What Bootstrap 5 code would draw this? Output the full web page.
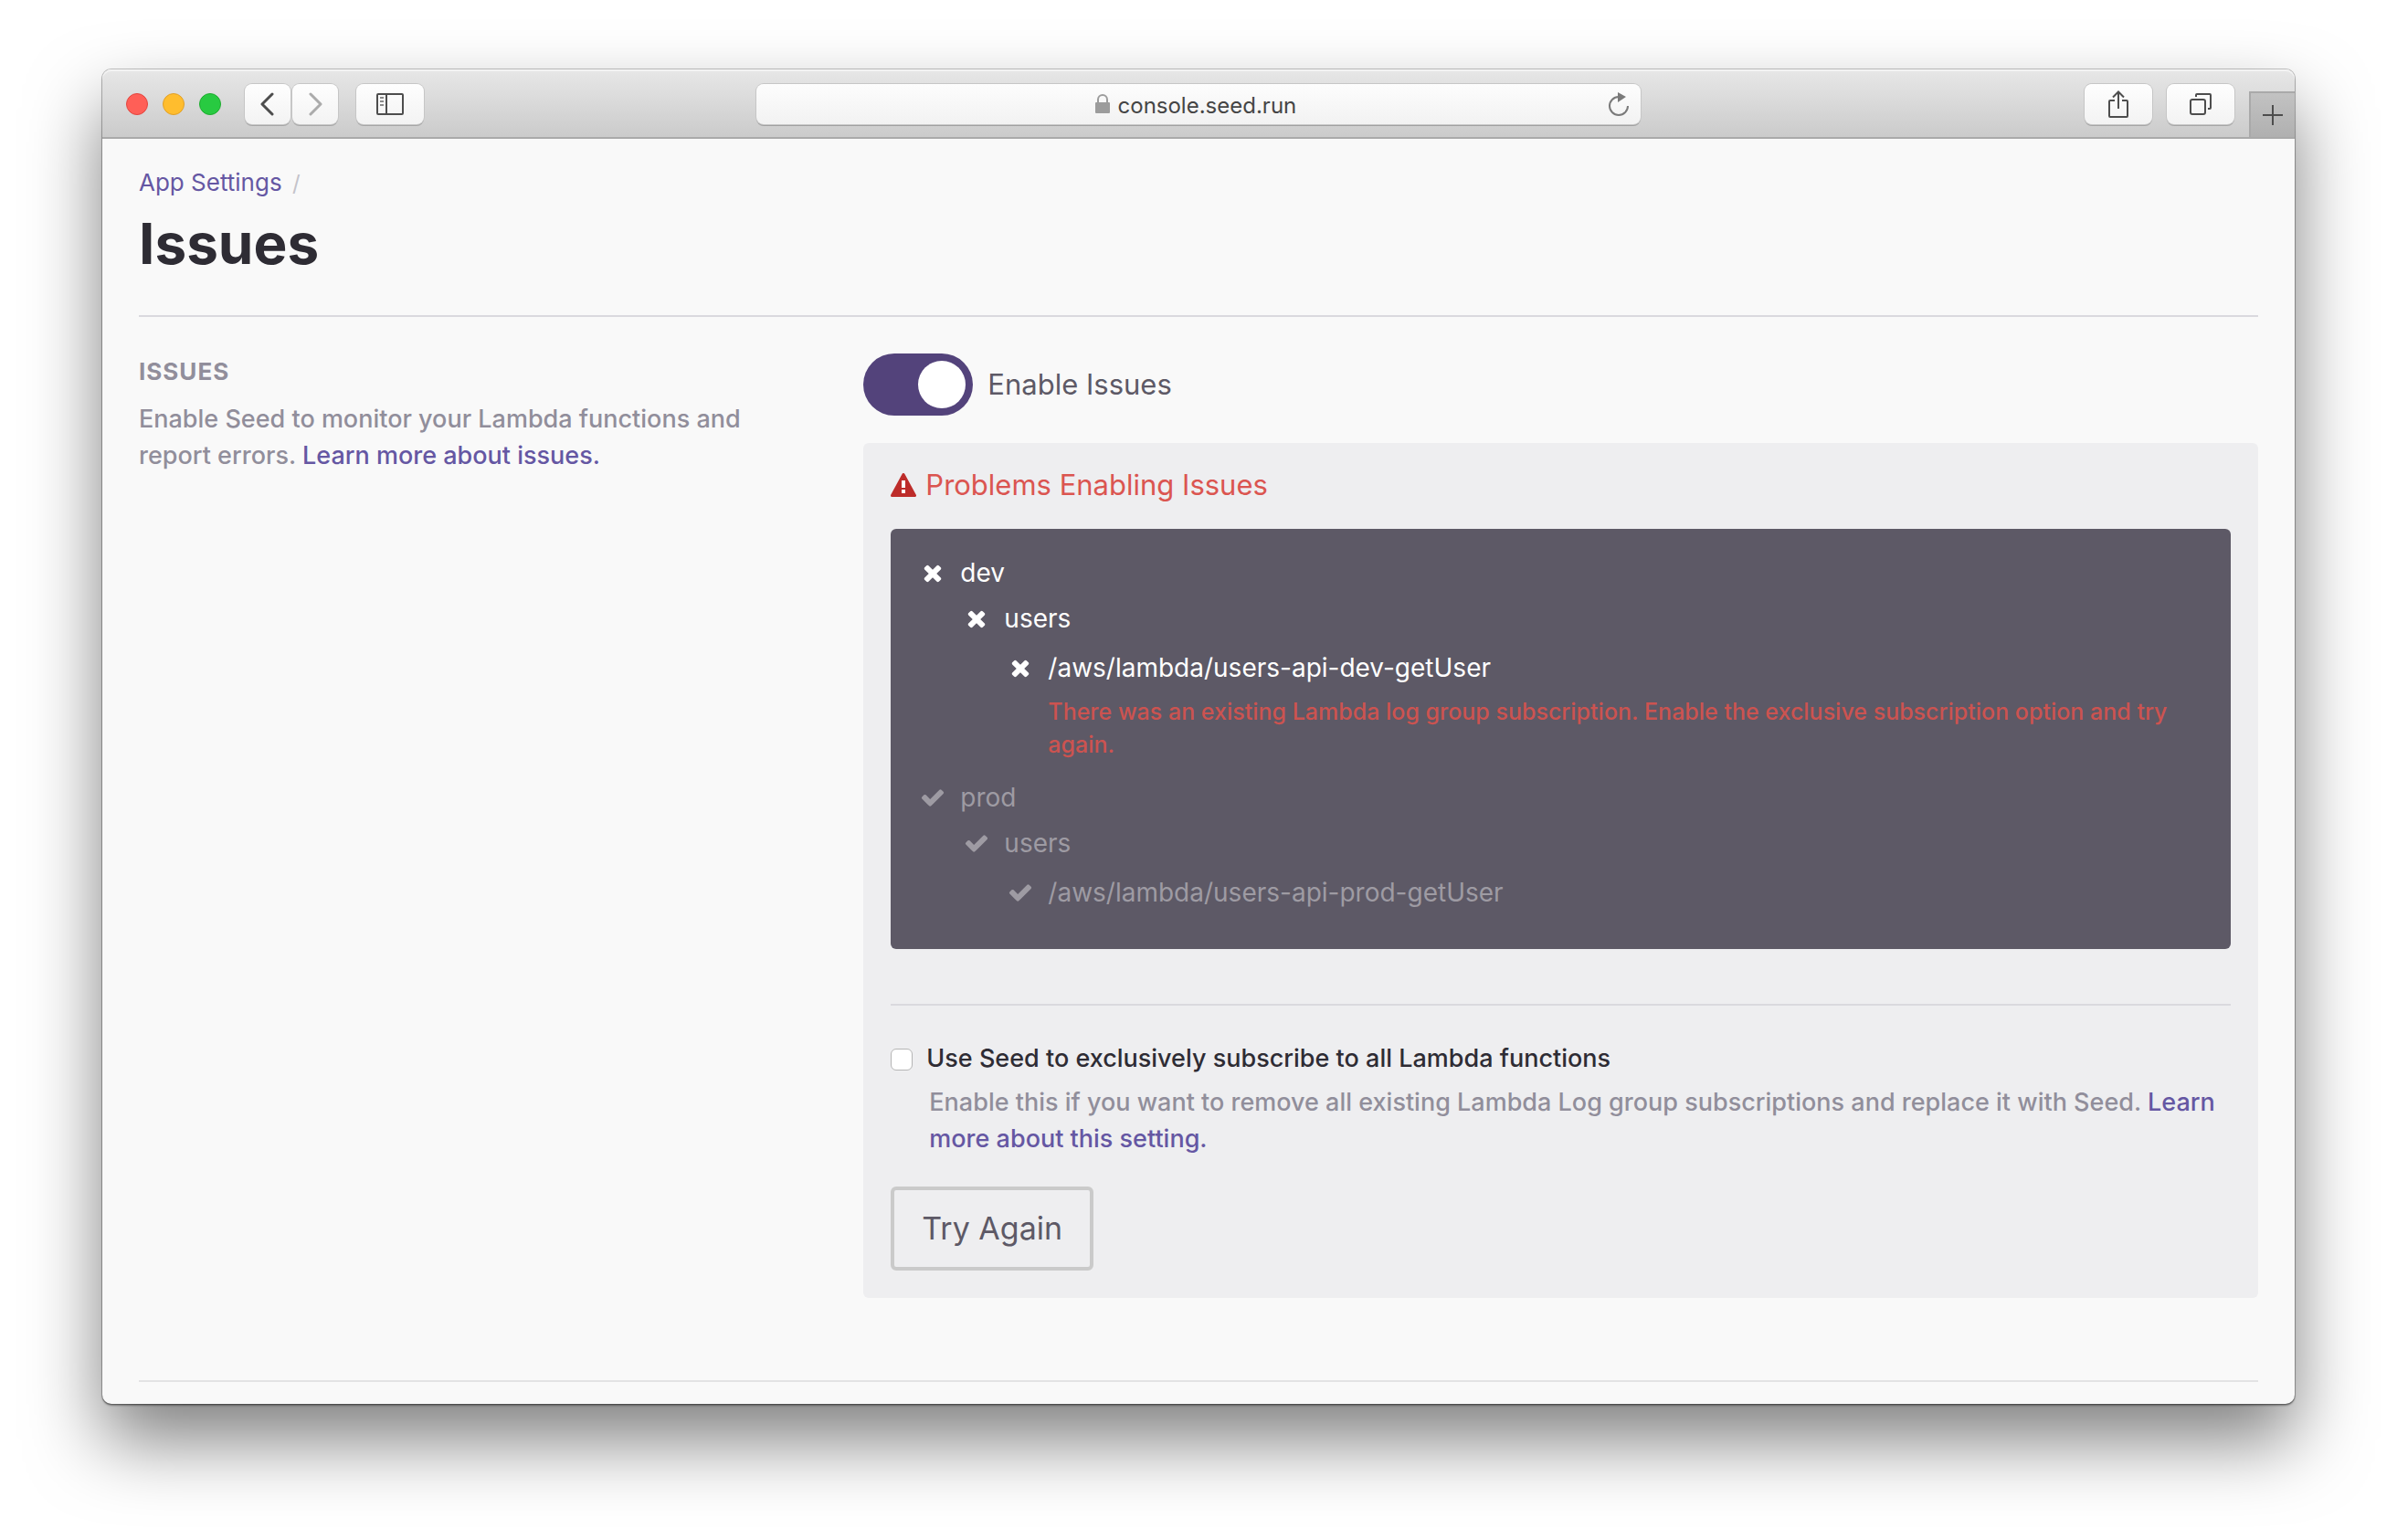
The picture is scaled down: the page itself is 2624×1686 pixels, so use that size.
<!DOCTYPE html>
<html lang="en">
<head>
<meta charset="utf-8">
<meta name="viewport" content="width=device-width, initial-scale=1">
<title>Issues - Seed Console</title>
<link href="https://cdn.jsdelivr.net/npm/bootstrap@5.3.0/dist/css/bootstrap.min.css" rel="stylesheet">
<style>
  body { background: #fff; font-family: Inter, Roboto, sans-serif; font-size: 27px; font-weight: 500; line-height: 40px; color: #2e2c34; padding: 76px 112px 148px; }
  a { color: #6557a3; text-decoration: none; }

  /* Browser window */
  .app-window { background: #f9f9f9; border-radius: 10px; box-shadow: 0 0 0 1px rgba(0,0,0,.22), 0 2px 2px rgba(0,0,0,.35), 0 40px 80px rgba(0,0,0,.5); }
  .app-bar { display: grid; grid-template-columns: 1fr minmax(0, 968px) 1fr; height: 76px; padding-top: 2px; background: linear-gradient(#e7e7e7, #cbcbcb); border-bottom: 2px solid #a9a9a9; border-radius: 10px 10px 0 0; box-shadow: inset 0 2px 0 #f3f3f3; overflow: hidden; }
  .lights { padding: 0 26px; }
  .light { width: 24px; height: 24px; border-radius: 50%; border: 1px solid; }
  .light-close { background: #ff5f57; border-color: #e2463f; }
  .light-min { background: #ffbd2e; border-color: #e0a028; }
  .light-max { background: #28ca41; border-color: #1eac2f; }
  .nav-pair { gap: 2px; margin-right: 20px; }
  .bar-btn { height: 44px; width: 74px; padding: 0; border: 0; border-radius: 8px; background: linear-gradient(#fefefe, #f3f3f3); box-shadow: 0 0 0 1px #c6c6c6, 0 2px 0 #a6a6a6; display: flex; align-items: center; justify-content: center; }
  .bar-btn-nav { width: 50px; }
  .address { height: 44px; border-radius: 8px; background: linear-gradient(#fdfdfd, #f2f2f2); box-shadow: 0 0 0 1px #c6c6c6, 0 2px 0 #a0a0a0; }
  .address input { border: 0; background: none; outline: 0; padding: 4px 0 0; width: 198px; height: 36px; font-family: Inter, sans-serif; font-size: 24px; color: #454545; }
  .bar-plain { border: 0; padding: 0; background: none; display: flex; }
  .new-tab { width: 50px; height: 50px; border: 0; border-left: 2px solid #a9a9a9; border-top: 2px solid #a9a9a9; background: linear-gradient(#c2c2c2, #b0b0b0); padding: 0; display: flex; align-items: center; justify-content: center; }

  /* Page */
  .page { padding: 28px 40px 24px; }
  .crumbs { font-size: 26px; font-weight: 400; }
  .crumb-sep { color: #c4c3ca; font-size: 24px; }
  .page-title { font-size: 62px; line-height: 76px; font-weight: 700; margin: 8px 0 40px; }
  .rule { border: 0; border-top: 2px solid #dad9de; opacity: 1; margin: 0; }
  .rule-light { border-color: #e3e3e4; }
  .settings-row { --bs-gutter-x: 60px; padding: 40px 0 90px; }
  .section-name { font-size: 26px; line-height: 40px; font-weight: 700; letter-spacing: 1px; text-transform: uppercase; color: #918e9b; margin: 0 0 12px; }
  .muted-text { color: #918e9b; }
  .form-switch.enable-switch { padding: 0; min-height: 0; margin: 0 0 30px; display: flex; align-items: center; gap: 16px; }
  .enable-switch .form-check-input { width: 120px; height: 68px; margin: 0; float: none; border: 0; background-color: #53437b; background-image: url("data:image/svg+xml,%3csvg xmlns='http://www.w3.org/2000/svg' viewBox='0 0 68 68'%3e%3ccircle cx='34' cy='34' r='26' fill='%23fff'/%3e%3c/svg%3e"); background-size: 68px 68px; }
  .enable-label { font-size: 31px; font-weight: 400; color: #5d5966; }
  .problem-panel { background: #eeeef0; border-radius: 6px; padding: 26px 30px 30px; }
  .problem-title { font-size: 31px; line-height: 40px; font-weight: 400; color: #db5550; margin: 0 0 28px; display: flex; align-items: center; gap: 10px; }
  .log-box { background: #5d5966; border-radius: 6px; padding: 28px 32px 42px; color: #fff; margin-bottom: 60px; }
  .log-box ul { list-style: none; margin: 0; padding: 0; }
  .log-box ul ul { padding-left: 48px; }
  .log-line { display: flex; align-items: center; gap: 16px; padding-bottom: 10px; font-size: 28px; font-weight: 400; }
  .log-path { padding-top: 4px; }
  .log-done { color: #9e9ba3; }
  .log-error { color: #cc5350; font-size: 25px; line-height: 36px; padding: 0 0 20px 44px; margin: 0; }
  .option { display: flex; gap: 15px; margin-top: 38px; }
  .option .form-check-input { width: 24px; height: 24px; margin: 9px 0 0; border: 1px solid #b5b5b5; border-radius: 6px; flex: none; background-color: #fff; }
  .option-help { padding-left: 42px; margin: 8px 0 32px; }
  .btn-retry { border: 4px solid #cacaca; border-radius: 6px; color: #5d5966; font-size: 34px; line-height: 44px; padding: 20px 30px; }
</style>
</head>
<body>
<div class="app-window">
  <header class="app-bar">
    <div class="d-flex align-items-center">
      <div class="d-flex gap-3 lights">
        <span class="light light-close"></span><span class="light light-min"></span><span class="light light-max"></span>
      </div>
      <div class="d-flex nav-pair">
        <button class="bar-btn bar-btn-nav" aria-label="Back"><svg width="16" height="26" fill="none" stroke="#4d4d4d" stroke-width="3" stroke-linecap="round" stroke-linejoin="round"><path d="M13 2 2 13l11 11"/></svg></button>
        <button class="bar-btn bar-btn-nav" aria-label="Forward"><svg width="16" height="26" fill="none" stroke="#ababab" stroke-width="3" stroke-linecap="round" stroke-linejoin="round"><path d="m3 2 11 11L3 24"/></svg></button>
      </div>
      <button class="bar-btn" aria-label="Sidebar"><svg width="30" height="24" fill="none" stroke="#4d4d4d" stroke-width="2"><rect x="1" y="1" width="28" height="22" rx="1"/><path d="M11 1v22"/><path stroke="#8a8a8a" d="M4 5h4M4 9h4M4 13h4"/></svg></button>
    </div>
    <div class="address align-self-center d-flex align-items-center">
      <span class="w-100"></span>
      <svg class="flex-shrink-0 me-2" width="18" height="22" viewBox="0 0 18 22"><rect x="1" y="9" width="16" height="12" rx="1" fill="#9c9c9c"/><path d="M4 10V6a5 5 0 0 1 10 0v4" fill="none" stroke="#9c9c9c" stroke-width="2"/></svg>
      <input class="flex-shrink-0" type="text" value="console.seed.run" aria-label="Address">
      <div class="w-100 d-flex justify-content-end pe-2"><button class="bar-plain me-1" aria-label="Reload"><svg width="24" height="28" viewBox="0 0 24 28"><path d="M12 6A10 10 0 1 0 22 16" fill="none" stroke="#7a7a7a" stroke-width="2"/><path d="M11 1v11l9-6z" fill="#7a7a7a"/></svg></button></div>
    </div>
    <div class="d-flex align-items-center justify-content-end gap-3">
      <button class="bar-btn" aria-label="Share"><svg width="24" height="32" viewBox="0 0 24 32" fill="none" stroke="#4d4d4d" stroke-width="2"><path d="M8 12H3q-1 0-1 1v16q0 1 1 1h18q1 0 1-1V13q0-1-1-1h-5M12 21V3M6 8.500l6-6 6 6"/></svg></button>
      <button class="bar-btn" aria-label="Tabs"><svg width="26" height="26" viewBox="0 0 26 26" fill="none" stroke="#4d4d4d" stroke-width="2"><rect x="2" y="8" width="16" height="16" rx="2"/><path d="M8 5V3q0-1 1-1h14q1 0 1 1v14q0 1-1 1h-2"/></svg></button>
      <button class="new-tab align-self-end" aria-label="New tab"><svg width="22" height="22" stroke="#4d4d4d" stroke-width="2"><path d="M11 0v22M0 11h22"/></svg></button>
    </div>
  </header>

  <main class="page">
    <nav class="crumbs" aria-label="breadcrumb"><a href="#">App Settings</a> <span class="crumb-sep ms-1">/</span></nav>
    <h1 class="page-title">Issues</h1>
    <hr class="rule">
    <div class="row settings-row">
      <section class="col-4">
        <h2 class="section-name">Issues</h2>
        <p class="muted-text mb-0">Enable Seed to monitor your Lambda functions and report errors. <a href="#">Learn more about issues.</a></p>
      </section>
      <section class="col-8">
        <div class="form-check form-switch enable-switch">
          <input class="form-check-input" type="checkbox" role="switch" id="enable" checked>
          <label class="enable-label" for="enable">Enable Issues</label>
        </div>
        <div class="problem-panel">
          <h3 class="problem-title"><svg width="28" height="26" viewBox="0 0 28 26"><path d="M14 1.500 26.500 24.500H1.500z" fill="#bd2c2a" stroke="#bd2c2a" stroke-width="3" stroke-linejoin="round"/><path d="M12 8h4v8h-4zM12 18h4v4h-4z" fill="#fff"/></svg>Problems Enabling Issues</h3>
          <div class="log-box">
            <svg class="d-none"><defs>
              <symbol id="cross" viewBox="0 0 1792 1792"><path d="M1490 1322q0 40-28 68l-136 136q-28 28-68 28t-68-28l-294-294-294 294q-28 28-68 28t-68-28l-136-136q-28-28-28-68t28-68l294-294-294-294q-28-28-28-68t28-68l136-136q28-28 68-28t68 28l294 294 294-294q28-28 68-28t68 28l136 136q28 28 28 68t-28 68l-294 294 294 294q28 28 28 68z"/></symbol>
              <symbol id="tick" viewBox="0 0 1792 1792"><path d="M1671 566q0 40-28 68l-724 724-136 136q-28 28-68 28t-68-28l-136-136-362-362q-28-28-28-68t28-68l136-136q28-28 68-28t68 28l294 295 656-657q28-28 68-28t68 28l136 136q28 28 28 68z"/></symbol>
            </defs></svg>
            <ul>
              <li><div class="log-line"><svg width="28" height="28" fill="currentColor"><use href="#cross"/></svg>dev</div>
                <ul><li><div class="log-line"><svg width="28" height="28" fill="currentColor"><use href="#cross"/></svg>users</div>
                  <ul><li><div class="log-line log-path"><svg width="28" height="28" fill="currentColor"><use href="#cross"/></svg>/aws/lambda/users-api-dev-getUser</div>
                    <p class="log-error">There was an existing Lambda log group subscription. Enable the exclusive subscription option and try again.</p></li></ul></li></ul></li>
              <li class="log-done"><div class="log-line"><svg width="28" height="28" fill="currentColor"><use href="#tick"/></svg>prod</div>
                <ul><li><div class="log-line"><svg width="28" height="28" fill="currentColor"><use href="#tick"/></svg>users</div>
                  <ul><li><div class="log-line log-path pb-0"><svg width="28" height="28" fill="currentColor"><use href="#tick"/></svg>/aws/lambda/users-api-prod-getUser</div></li></ul></li></ul></li>
            </ul>
          </div>
          <hr class="rule">
          <div class="option">
            <input class="form-check-input" type="checkbox" id="exclusive">
            <label for="exclusive">Use Seed to exclusively subscribe to all Lambda functions</label>
          </div>
          <p class="option-help muted-text">Enable this if you want to remove all existing Lambda Log group subscriptions and replace it with Seed. <a href="#">Learn more about this setting.</a></p>
          <button class="btn btn-retry" type="button">Try Again</button>
        </div>
      </section>
    </div>
    <hr class="rule rule-light">
  </main>
</div>
<script src="https://cdn.jsdelivr.net/npm/bootstrap@5.3.0/dist/js/bootstrap.bundle.min.js"></script>
</body>
</html>
